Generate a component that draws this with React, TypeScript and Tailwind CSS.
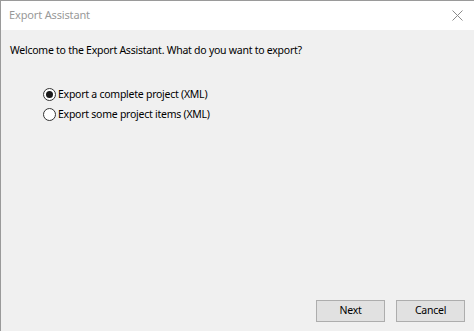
function Radio({ checked, label }: { checked: boolean; label: string }) {
  return (
    <div className="flex h-[20px] items-center">
      <span className="flex h-[13px] w-[13px] items-center justify-center rounded-full border border-[#333333] bg-white">
        {checked && <span className="h-[7px] w-[7px] rounded-full bg-[#1a1a1a]" />}
      </span>
      <span className="ml-[2px] text-[10.5px] tracking-[-0.25px] text-black">{label}</span>
    </div>
  );
}

function DlgButton({ label }: { label: string }) {
  return (
    <button
      type="button"
      className="h-[22px] w-[69px] border border-[#adadad] bg-[#e1e1e1] text-[10.5px] tracking-[-0.25px] text-black"
    >
      {label}
    </button>
  );
}

export default function App() {
  return (
    <div
      className="flex h-[331px] w-[474px] flex-col border-l border-t border-[#9a9a9a] bg-[#f0f0f0]"
      style={{ fontFamily: '"Noto Sans", "Open Sans", sans-serif' }}
    >
      <div className="flex h-[29px] items-center justify-between bg-white pl-[8px] pr-[11px]">
        <span className="text-[11px] tracking-[-0.15px] text-[#999999]">Export Assistant</span>
        <svg width="11" height="11" viewBox="0 0 11 11">
          <path d="M0.5 0.5L10.5 10.5M10.5 0.5L0.5 10.5" stroke="#8a8a8a" strokeWidth="1" />
        </svg>
      </div>
      <div className="flex flex-1 flex-col px-[9px]">
        <p className="mt-[13px] text-[10.5px] tracking-[-0.25px] text-black">
          Welcome to the Export Assistant. What do you want to export?
        </p>
        <div className="ml-[33px] mt-[26px] flex flex-col">
          <Radio checked label="Export a complete project (XML)" />
          <Radio checked={false} label="Export some project items (XML)" />
        </div>
        <div className="mb-[9px] mt-auto flex justify-end gap-[11px]">
          <DlgButton label="Next" />
          <DlgButton label="Cancel" />
        </div>
      </div>
    </div>
  );
}
